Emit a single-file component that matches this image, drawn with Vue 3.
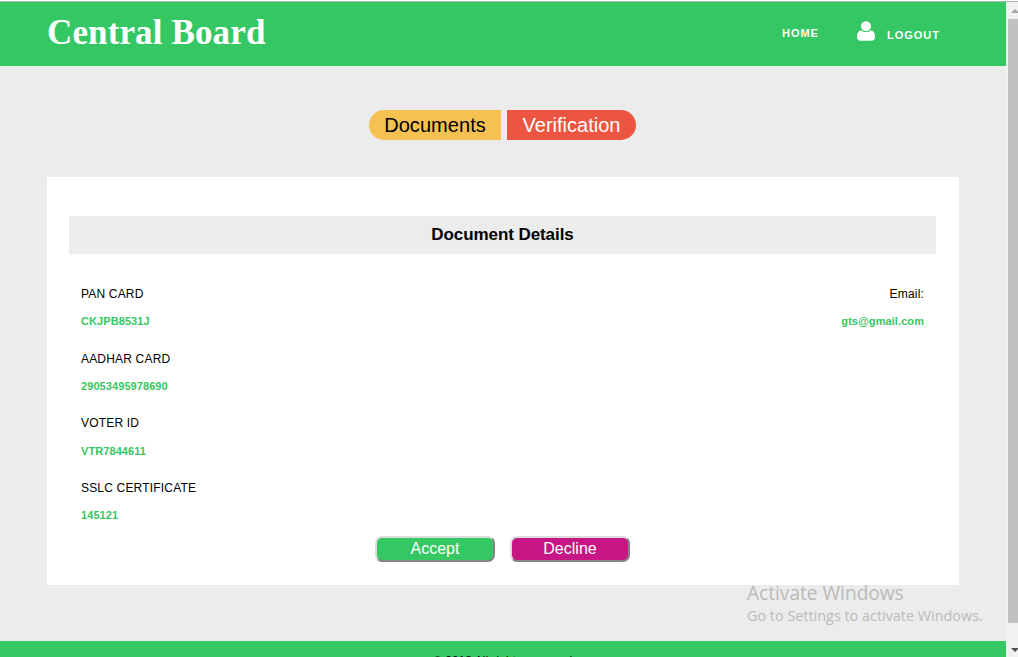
<script setup>
const documents = [
  { label: 'PAN CARD', value: 'CKJPB8531J' },
  { label: 'AADHAR CARD', value: '29053495978690' },
  { label: 'VOTER ID', value: 'VTR7844611' },
  { label: 'SSLC CERTIFICATE', value: '145121' },
]
</script>

<template>
  <div class="window">
    <div class="page">
      <header class="header">
        <h1 class="brand">Central Board</h1>
        <nav class="nav">
          <a class="home">HOME</a>
          <a class="logout">
            <svg class="user" viewBox="0 0 18 20" width="18" height="20">
              <path d="M4.3 9.2C1.3 9.6 0 12 0 16.2C0 18.4 1.4 19.7 3.4 19.7H14.6C16.6 19.7 18 18.4 18 16.2C18 12 16.7 9.6 13.7 9.2C12.6 10.4 11 11.1 9 11.1S5.4 10.4 4.3 9.2Z" />
              <circle cx="9" cy="5.2" r="5" />
            </svg>
            <span>LOGOUT</span>
          </a>
        </nav>
      </header>

      <main class="main">
        <div class="tabs">
          <a class="tab documents">Documents</a>
          <a class="tab verification">Verification</a>
        </div>
        <section class="card">
          <h2 class="heading">Document Details</h2>
          <div class="details">
            <dl class="list">
              <div v-for="doc in documents" :key="doc.label" class="entry">
                <dt>{{ doc.label }}</dt>
                <dd>{{ doc.value }}</dd>
              </div>
            </dl>
            <dl class="list right">
              <div class="entry">
                <dt class="email-label">Email:</dt>
                <dd class="email">gts@gmail.com</dd>
              </div>
            </dl>
          </div>
          <div class="actions">
            <button class="accept">Accept</button>
            <button class="decline">Decline</button>
          </div>
        </section>
      </main>
      <footer class="footer"><span>© 2018 All rights reserved</span></footer>
    </div>

    <div class="scrollbar">
      <svg class="arrow" viewBox="0 0 10 17" width="10" height="17"><path d="M3 11L7 7L11 11Z" fill="#a3a3a3" /></svg>
      <div class="thumb"></div>
      <svg class="arrow down" viewBox="0 0 10 17" width="10" height="17"><path d="M3 8H11L7 12Z" fill="#505050" /></svg>
    </div>

    <div class="watermark">
      <div class="activate">Activate Windows</div>
      <div class="settings">Go to Settings to activate Windows.</div>
    </div>
  </div>
</template>

<style>
body { background: #fff; overflow: hidden; }
</style>

<style scoped>
* { box-sizing: border-box; }
.window {
  position: relative;
  display: flex;
  height: 656px;
  margin-top: 1px;
  overflow: hidden;
  border-top: 1px solid #b4b4b4;
  font-family: "Liberation Sans", Arial, sans-serif;
  color: #000;
}
.page { width: 1006px; display: flex; flex-direction: column; background: #ececec; }
.header {
  flex: none;
  height: 64px;
  padding: 0 66px 0 47px;
  display: flex;
  justify-content: space-between;
  background: #35c763;
  color: #fff;
}
.brand {
  margin: 11px 0 0;
  font: bold 35px/40px "Liberation Serif", "Times New Roman", serif;
  letter-spacing: 0.13px;
  white-space: nowrap;
}
.nav { display: flex; font-size: 11px; font-weight: bold; letter-spacing: 1px; line-height: 14px; }
.home { margin: 24px 38px 0 0; }
.logout { display: flex; }
.logout span { margin-top: 26px; }
.user { margin: 19px 12px 0 0; fill: #fff; }
.main { flex: none; height: 575px; padding: 44px 47px 0; }
.tabs { display: flex; gap: 6px; margin-left: 322px; }
.tab { height: 30px; font-size: 20px; line-height: 30px; text-align: center; }
.documents { width: 132px; border-radius: 15px 0 0 15px; background: #f7c052; letter-spacing: 0.05px; }
.verification { width: 129px; border-radius: 0 15px 15px 0; background: #eb5541; color: #fff; }
.card { height: 408px; margin-top: 37px; padding: 39px 23px 0 22px; background: #fff; }
.heading { height: 38px; margin: 0; background: #ececec; font-size: 17px; line-height: 37px; letter-spacing: -0.08px; text-align: center; }
.details { display: flex; justify-content: space-between; height: 282px; padding: 32px 12px 0; }
.list { margin: 0; }
.right { text-align: right; }
.entry { height: 64.67px; }
dt { font-size: 12px; line-height: 16px; letter-spacing: 0.18px; }
dd { margin: 11.3px 0 0; font-size: 11px; font-weight: bold; line-height: 16px; color: #35c763; letter-spacing: 0.08px; }
.actions { display: flex; gap: 15px; margin-left: 306px; }
.actions button {
  width: 120px;
  height: 26px;
  padding: 0 0 1px;
  border: 2px solid;
  border-color: #dcdcdc #858585 #858585 #dcdcdc;
  border-radius: 7px;
  font: 16px/20px "Liberation Sans", Arial, sans-serif;
  color: #fff;
}
.actions .accept { background: #35c763; }
.actions .decline { background: #c71585; }
.footer { flex: none; height: 16px; overflow: hidden; background: #35c763; text-align: center; font-size: 11px; line-height: 14px; }
.footer span { display: inline-block; margin-top: 12px; letter-spacing: 0.5px; }
.scrollbar { width: 12px; padding-left: 2px; background: #f1f1f1; }
.arrow { display: block; }
.arrow.down { margin-top: 17px; }
.thumb { height: 604px; background: #c1c1c1; }
.watermark {
  position: absolute;
  left: 747px;
  top: 578px;
  font-family: "Open Sans", "Noto Sans", sans-serif;
  color: #bababa;
  white-space: nowrap;
}
.activate { font-size: 19.1px; line-height: 26px; }
.settings { font-size: 14.4px; line-height: 19px; }
</style>
